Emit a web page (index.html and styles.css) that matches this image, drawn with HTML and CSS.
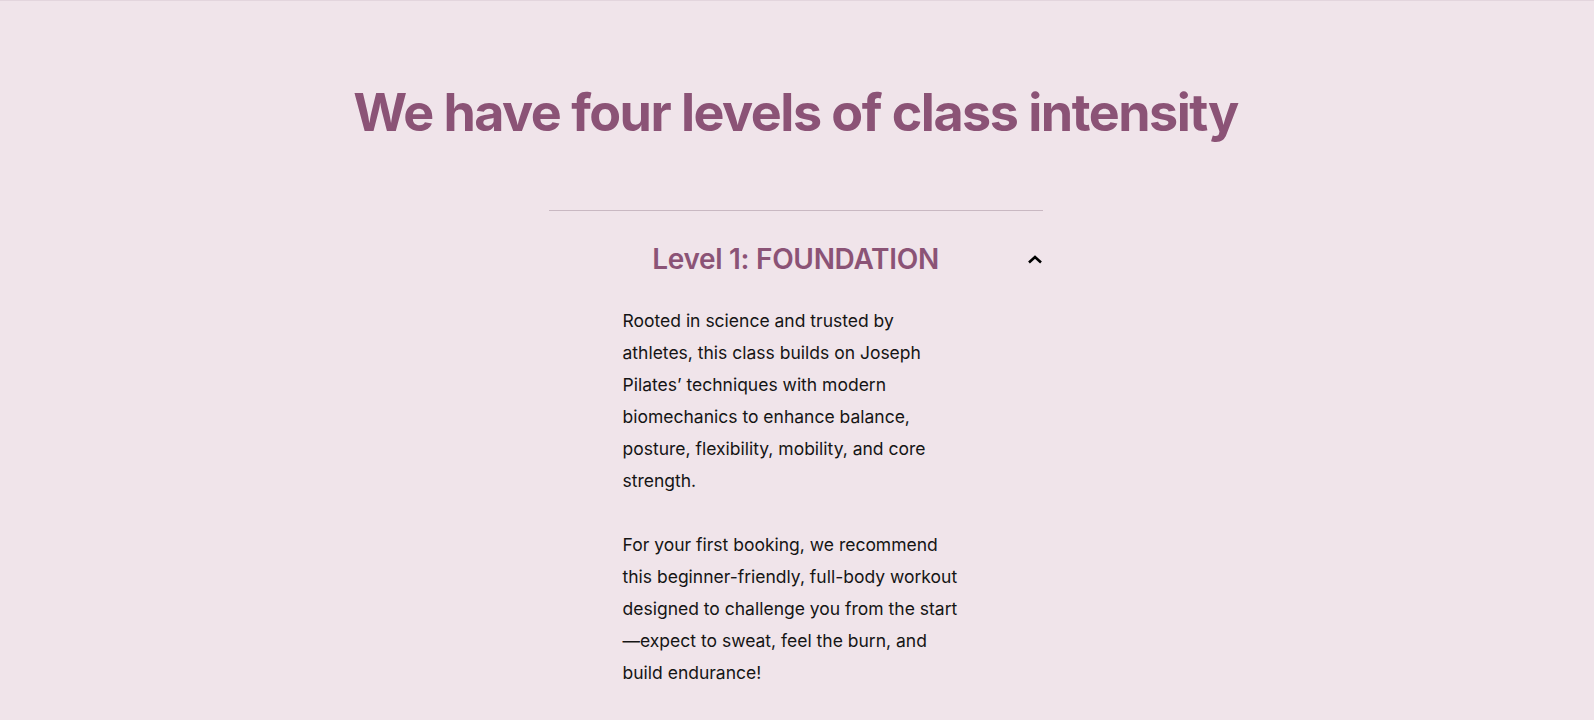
FILE: index.html
```html
<!DOCTYPE html>
<html lang="en">
<head>
  <meta charset="UTF-8">
  <meta name="viewport" content="width=device-width, initial-scale=1.0">
  <title>Class Intensity Levels</title>
  <link rel="stylesheet" href="styles.css">
</head>
<body>
  <div class="levels">
    <h1 class="levels-title">We have four levels of class intensity</h1>

    <!-- Accordion -->
    <div class="accordion">
      <div class="accordion-item open">
        <button class="accordion-header">
          <span class="accordion-spacer"></span>
          <span class="accordion-title">Level 1: FOUNDATION</span>
          <svg class="accordion-icon" width="16" height="9" viewBox="0 0 16 9" aria-hidden="true">
            <path d="M2 7.5 L8 2 L14 7.5" fill="none" stroke="#000" stroke-width="2.6"/>
          </svg>
        </button>
        <div class="accordion-panel">
          <p>Rooted in science and trusted by<br>
            athletes, this class builds on Joseph<br>
            Pilates’ techniques with modern<br>
            biomechanics to enhance balance,<br>
            posture, flexibility, mobility, and core<br>
            strength.</p>
          <p>For your first booking, we recommend<br>
            this beginner-friendly, full-body workout<br>
            designed to challenge you from the start<br>
            —expect to sweat, feel the burn, and<br>
            build endurance!</p>
        </div>
      </div>
    </div>
  </div>
</body>
</html>
```

FILE: styles.css
```css
body {
  font-family: Inter, "Noto Sans", sans-serif;
  margin: 0;
  padding: 0;
  background-color: #f0e4ea;
  border-top: 1px solid #e3d5dd;
  color: #151515;
}
.levels {
  padding: 81px 3px 0 0;
}
.levels-title {
  margin: 0;
  text-align: center;
  font-size: 52px;
  line-height: 1.2;
  font-weight: 700;
  letter-spacing: -1.5px;
  color: #8b5376;
}
.accordion {
  width: 494px;
  margin: 66px auto 0;
}
.accordion-item {
  border-top: 1px solid #c9b8c2;
}
.accordion-header {
  display: grid;
  grid-template-columns: 1fr auto 1fr;
  align-items: center;
  width: 100%;
  padding: 31px 0 29px;
  border: none;
  background: none;
  cursor: pointer;
  font-family: inherit;
}
.accordion-title {
  font-size: 28px;
  font-weight: 600;
  letter-spacing: -0.3px;
  color: #8b5376;
}
.accordion-icon {
  justify-self: end;
}
.accordion-panel {
  padding: 0 74px;
}
.accordion-panel p {
  margin: 0 0 32px;
  font-size: 17.5px;
  line-height: 32px;
  white-space: nowrap;
}
```
